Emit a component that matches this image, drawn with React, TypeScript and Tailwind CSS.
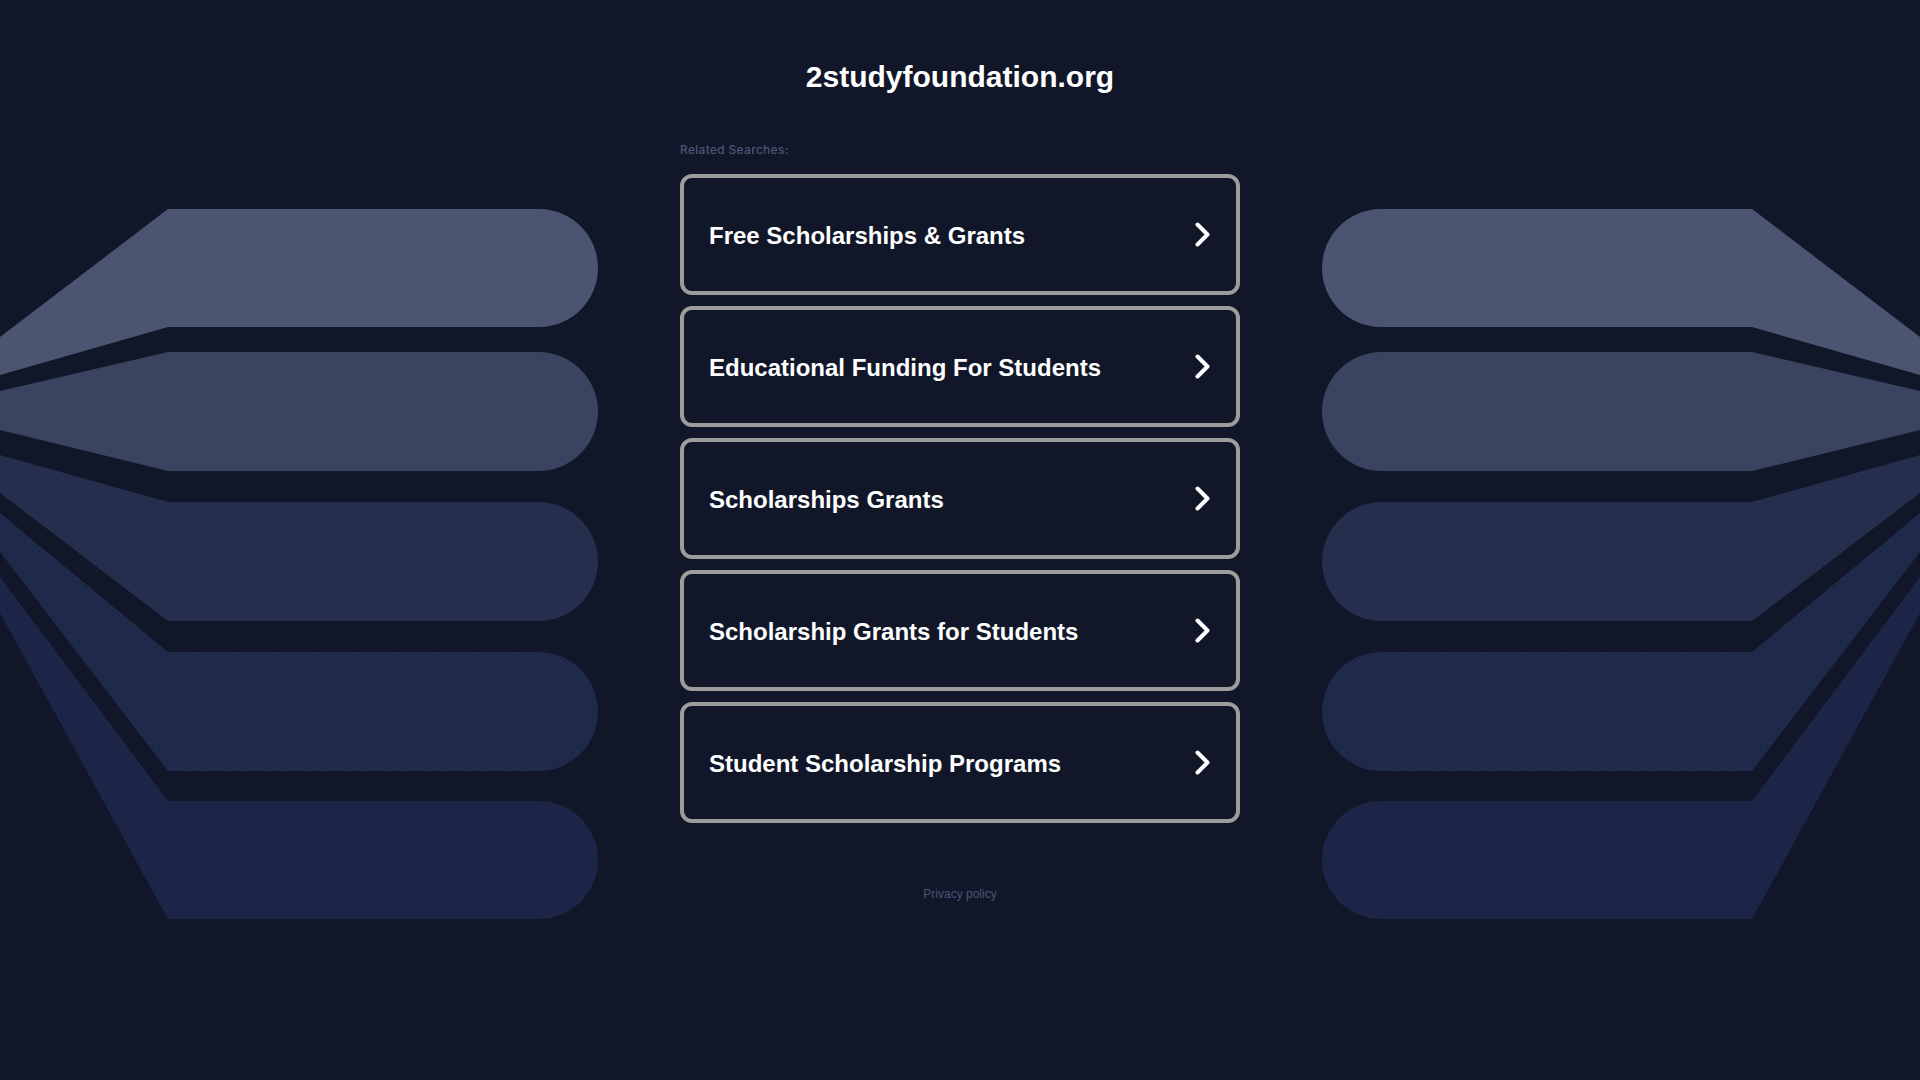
import React from 'react'

const searches = [
  'Free Scholarships & Grants',
  'Educational Funding For Students',
  'Scholarships Grants',
  'Scholarship Grants for Students',
  'Student Scholarship Programs',
]

// each band: top/bottom of the rounded bar, and where its wing meets the page edge
const bands = [
  { t: 209, b: 327, wt: 337, wb: 375, fill: '#4b5572', dots: false },
  { t: 352, b: 471, wt: 391, wb: 430, fill: '#3a4360', dots: false },
  { t: 502, b: 621, wt: 455, wb: 493, fill: '#252e4d', dots: false },
  { t: 652, b: 771, wt: 513, wb: 552, fill: '#1e2849', dots: true },
  { t: 801, b: 919, wt: 577, wb: 613, fill: '#1b2446', dots: true },
]

function Fan({ flip, id }: { flip?: boolean; id: string }) {
  return (
    <svg width="598" height="800" viewBox="0 130 598 800" className="shrink-0">
      <defs>
        <pattern id={id} width="5" height="5" patternUnits="userSpaceOnUse">
          <circle cx="1" cy="1" r="0.7" fill="#2c3761" />
          <circle cx="3.5" cy="3.5" r="0.7" fill="#2c3761" />
        </pattern>
      </defs>
      <g transform={flip ? 'translate(598 0) scale(-1 1)' : undefined}>
        {bands.map((s, i) => {
          const r = (s.b - s.t) / 2
          const d = `M0 ${s.wt} L168 ${s.t} L${598 - r} ${s.t} A${r} ${r} 0 0 1 ${598 - r} ${s.b} L168 ${s.b} L0 ${s.wb} Z`
          return (
            <g key={i}>
              <path d={d} fill={s.fill} />
              {s.dots && <path d={d} fill={`url(#${id})`} opacity="0.55" />}
            </g>
          )
        })}
      </g>
    </svg>
  )
}

function Chevron() {
  return (
    <svg width="15" height="25" viewBox="0 0 15 25" className="shrink-0">
      <polyline
        points="2.5,2.5 12.5,12.5 2.5,22.5"
        fill="none"
        stroke="#ffffff"
        strokeWidth="4"
        strokeLinecap="round"
        strokeLinejoin="round"
      />
    </svg>
  )
}

export default function App() {
  return (
    <div className="min-h-screen bg-[#111729] font-['Liberation_Sans',Arial,sans-serif]">
      <h1 className="pt-[59px] h-[95px] text-center text-[30px] leading-[36px] font-bold text-white">
        2studyfoundation.org
      </h1>

      <div className="mt-[35px] flex justify-between items-start">
        <Fan id="dots-l" />

        <div className="w-[560px] shrink-0 pt-[12px] flex flex-col">
          <div className="text-[12px] leading-[16px] font-medium tracking-[0.3px] text-[#4b5572] font-['Inter',sans-serif]">
            Related Searches:
          </div>

          <div className="mt-[16px] flex flex-col gap-[11px]">
            {searches.map((s) => (
              <a
                key={s}
                href="#"
                className="h-[121px] flex items-center justify-between border-4 border-[#9c9c9c] rounded-[12px] pl-[25px] pr-[26px]"
              >
                <span className="pt-[2px] text-[24px] leading-[28px] font-bold text-white">{s}</span>
                <Chevron />
              </a>
            ))}
          </div>

          <div className="mt-[63px] text-center text-[12px] leading-[16px] text-[#4b5572]">
            Privacy policy
          </div>
        </div>

        <Fan id="dots-r" flip />
      </div>
    </div>
  )
}
